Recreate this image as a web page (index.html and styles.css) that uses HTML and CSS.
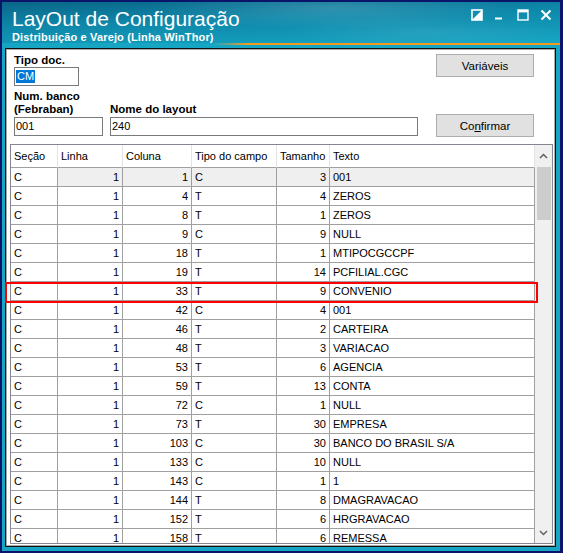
FILE: index.html
```html
<!DOCTYPE html>
<html lang="pt-BR">
<head>
    <meta charset="UTF-8">
    <title>LayOut de Configuração</title>
    <link rel="stylesheet" href="styles.css">
</head>
<body>
<div class="window">
    <div class="titlebar">
        <div class="titles">
            <div class="title">LayOut de Configuração</div>
            <div class="subtitle">Distribuição e Varejo (Linha WinThor)</div>
        </div>
        <div class="controls">
            <svg width="12" height="12" viewBox="0 0 12 12"><rect x="1" y="1" width="10" height="10" fill="none" stroke="#fff" stroke-width="1.6"/><polygon points="11,1 11,11 1,11" fill="#fff"/></svg>
            <svg width="12" height="12" viewBox="0 0 12 12"><rect x="1" y="8.5" width="7" height="2" fill="#fff"/></svg>
            <svg width="12" height="12" viewBox="0 0 12 12"><rect x="1" y="1" width="10" height="10" fill="none" stroke="#fff" stroke-width="1.4"/><rect x="1" y="1" width="10" height="2.4" fill="#fff"/></svg>
            <svg width="12" height="12" viewBox="0 0 12 12"><path d="M1.5 1.5 L10.5 10.5 M10.5 1.5 L1.5 10.5" stroke="#fff" stroke-width="2"/></svg>
        </div>
    </div>
    <div class="accent"></div>

    <div class="panel">
        <div class="form">
            <div class="fields">
                <div class="field">
                    <label>Tipo doc.</label>
                    <div class="textbox tipo"><span class="sel">CM</span></div>
                </div>
                <div class="field-row">
                    <div class="field banco">
                        <label>Num. banco<br>(Febraban)</label>
                        <div class="textbox">001</div>
                    </div>
                    <div class="field nome">
                        <label>Nome do layout</label>
                        <div class="textbox">240</div>
                    </div>
                </div>
            </div>
            <div class="buttons">
                <button>Variáveis</button>
                <button>Co<u>n</u>firmar</button>
            </div>
        </div>

        <div class="grid">
            <div class="grid-body">
                <table id="layoutTable">
                    <colgroup>
                        <col style="width:47px"><col style="width:65px"><col style="width:69px">
                        <col style="width:85px"><col style="width:53px"><col style="width:205px">
                    </colgroup>
                    <thead>
                        <tr>
                            <th>Seção</th>
                            <th>Linha</th>
                            <th>Coluna</th>
                            <th>Tipo do campo</th>
                            <th>Tamanho</th>
                            <th>Texto</th>
                        </tr>
                    </thead>
                    <tbody>
                        <!-- rows are added by the script below -->
                    </tbody>
                </table>
            </div>
            <div class="vscroll">
                <div class="arrow up"><svg width="9" height="6" viewBox="0 0 9 6"><polyline points="1,5 4.5,1.5 8,5" fill="none" stroke="#606060" stroke-width="1.5"/></svg></div>
                <div class="thumb"></div>
                <div class="track"></div>
                <div class="arrow down"><svg width="9" height="6" viewBox="0 0 9 6"><polyline points="1,1 4.5,4.5 8,1" fill="none" stroke="#606060" stroke-width="1.5"/></svg></div>
            </div>
        </div>
    </div>

    <div class="highlight"></div>
</div>

<script>
    const rows = [
        ['C', 1, 1, 'C', 3, '001'],
        ['C', 1, 4, 'T', 4, 'ZEROS'],
        ['C', 1, 8, 'T', 1, 'ZEROS'],
        ['C', 1, 9, 'C', 9, 'NULL'],
        ['C', 1, 18, 'T', 1, 'MTIPOCGCCPF'],
        ['C', 1, 19, 'T', 14, 'PCFILIAL.CGC'],
        ['C', 1, 33, 'T', 9, 'CONVENIO'],
        ['C', 1, 42, 'C', 4, '001'],
        ['C', 1, 46, 'T', 2, 'CARTEIRA'],
        ['C', 1, 48, 'T', 3, 'VARIACAO'],
        ['C', 1, 53, 'T', 6, 'AGENCIA'],
        ['C', 1, 59, 'T', 13, 'CONTA'],
        ['C', 1, 72, 'C', 1, 'NULL'],
        ['C', 1, 73, 'T', 30, 'EMPRESA'],
        ['C', 1, 103, 'C', 30, 'BANCO DO BRASIL S/A'],
        ['C', 1, 133, 'C', 10, 'NULL'],
        ['C', 1, 143, 'C', 1, '1'],
        ['C', 1, 144, 'T', 8, 'DMAGRAVACAO'],
        ['C', 1, 152, 'T', 6, 'HRGRAVACAO'],
        ['C', 1, 158, 'T', 6, 'REMESSA']
    ];

    const tableBody = document.querySelector('#layoutTable tbody');

    rows.forEach(function(values, i) {
        const tr = document.createElement('tr');
        if (i === 0) tr.classList.add('current');
        values.forEach(function(v, col) {
            const td = document.createElement('td');
            td.textContent = v;
            if (col === 1 || col === 2 || col === 4) td.classList.add('num');
            tr.appendChild(td);
        });
        tableBody.appendChild(tr);
    });
</script>
</body>
</html>
```

FILE: styles.css
```css
body {
    margin: 0;
    background-color: #0a1468;
    font-family: "Liberation Sans", Arial, sans-serif;
}

.window {
    position: relative;
    width: 563px;
    height: 553px;
    box-sizing: border-box;
    border: 2px solid #0a1468;
    border-right-width: 3px;
    background-color: #16a6c4;
    display: flex;
    flex-direction: column;
}

/* title bar */
.titlebar {
    height: 41px;
    display: flex;
    justify-content: space-between;
    background:
        radial-gradient(ellipse 260px 30px at 330px 6px, rgba(255,255,255,0.14), transparent 70%),
        radial-gradient(ellipse 200px 24px at 420px 30px, rgba(255,255,255,0.08), transparent 70%),
        linear-gradient(178deg, #0a6688 0%, #0e86a8 40%, #16a6c4 100%);
}
.titles {
    padding: 6px 0 0 10px;
    color: #fff;
}
.title {
    font-size: 21px;
    line-height: 22px;
}
.subtitle {
    margin-top: 1px;
    font-size: 11px;
    line-height: 13px;
    font-weight: bold;
    letter-spacing: 0.15px;
}
.controls {
    display: flex;
    gap: 11px;
    padding: 7px 8px 0 0;
}
.controls svg {
    display: block;
}

.accent {
    height: 2px;
    background: linear-gradient(to right, rgba(243,154,30,0) 38%, #f39a1e 44%);
}

/* main panel */
.panel {
    flex: 1;
    margin: 3px 4px 4px 3px;
    background-color: #fff;
    border: 1px solid #111;
    box-shadow: inset 0 0 0 1px #a8a8a8;
    display: flex;
    flex-direction: column;
    min-height: 0;
}

.form {
    height: 95px;
    box-sizing: border-box;
    padding: 5px 21px 0 8px;
    display: flex;
    justify-content: space-between;
}
.field {
    display: flex;
    flex-direction: column;
}
.field label {
    font-size: 11.5px;
    line-height: 13px;
    font-weight: bold;
    color: #000;
}
.field-row {
    display: flex;
    align-items: flex-end;
    gap: 7px;
    margin-top: 4px;
}
.field-row label {
    margin-bottom: 1px;
}
.textbox {
    height: 19px;
    box-sizing: border-box;
    border: 1px solid #7a7a7a;
    padding-left: 1px;
    font-size: 11px;
    line-height: 17px;
    color: #000;
    background-color: #fff;
}
.tipo {
    width: 65px;
}
.banco .textbox {
    width: 89px;
}
.nome .textbox {
    width: 308px;
}
.sel {
    display: inline-block;
    background-color: #0078d7;
    color: #fff;
    line-height: 13px;
    padding: 0 1px;
    margin-top: 2px;
}

.buttons {
    width: 98px;
    display: flex;
    flex-direction: column;
    gap: 37px;
}
.buttons button {
    height: 23px;
    border: 1px solid #adadad;
    background-color: #e1e1e1;
    font-family: "Liberation Sans", Arial, sans-serif;
    font-size: 11.5px;
    color: #000;
    padding: 0;
}

/* grid */
.grid {
    flex: 1;
    min-height: 0;
    margin: 0 2px 2px 4px;
    border: 1px solid #828790;
    display: flex;
    overflow: hidden;
}
.grid-body {
    width: 524px;
    overflow: hidden;
}
table {
    width: 524px;
    table-layout: fixed;
    border-collapse: separate;
    border-spacing: 0;
    font-size: 11px;
}
th, td {
    padding: 0 3px;
    text-align: left;
    white-space: nowrap;
    overflow: hidden;
    font-weight: normal;
    color: #000;
}
th {
    line-height: 22px;
    border-right: 1px solid #e3e3e3;
    border-bottom: 1px solid #a0a0a0;
}
td {
    line-height: 18px;
    border-right: 1px solid #a0a0a0;
    border-bottom: 1px solid #a0a0a0;
}
td.num {
    text-align: right;
}
tr.current td {
    background-color: #efefef;
}
tr.current td:first-child {
    background-color: #fff;
}

.vscroll {
    width: 17px;
    background-color: #f0f0f0;
    display: flex;
    flex-direction: column;
}
.arrow {
    display: flex;
    align-items: center;
    justify-content: center;
}
.arrow.up {
    height: 22px;
}
.arrow.down {
    height: 20px;
}
.thumb {
    height: 53px;
    margin: 0 1px 0 2px;
    background-color: #cdcdcd;
}
.track {
    flex: 1;
}

/* red mark around the CONVENIO row */
.highlight {
    position: absolute;
    top: 280px;
    left: 3px;
    width: 533px;
    height: 21px;
    box-sizing: border-box;
    border: 2px solid #f00;
}
```
